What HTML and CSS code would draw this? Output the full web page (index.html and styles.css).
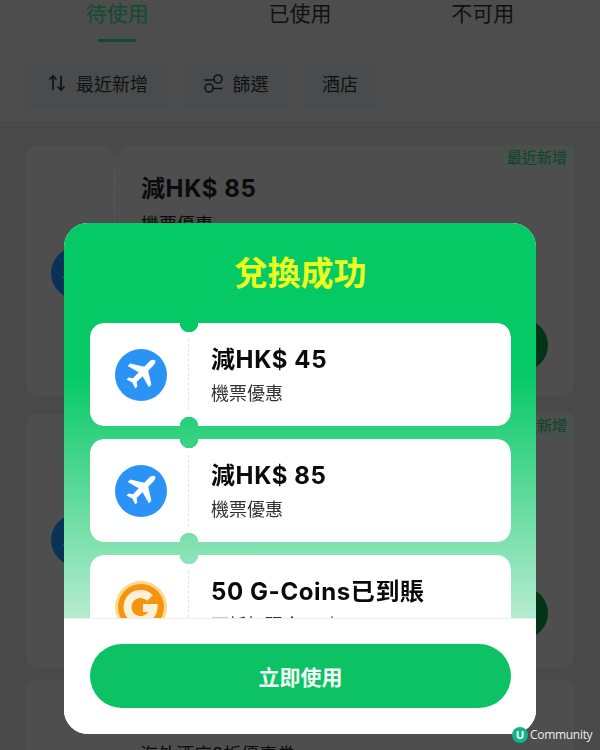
FILE: index.html
```html
<!DOCTYPE html>
<html lang="zh-Hant">
<head>
    <meta charset="UTF-8">
    <meta name="viewport" content="width=device-width, initial-scale=1.0">
    <title>兌換成功</title>
    <link rel="stylesheet" href="styles.css">
</head>
<body>
    <div class="page">
        <div class="top">
            <div class="tabs">
                <div class="tab active">待使用<span class="tab-line"></span></div>
                <div class="tab">已使用</div>
                <div class="tab">不可用</div>
            </div>
            <div class="chips">
                <div class="chip chip-sort">
                    <svg width="18" height="18" viewBox="0 0 18 18" fill="none" stroke="#111" stroke-width="1.7"><path d="M5 16V2M1.500 5.500 5 2l3.500 3.500M13 2v14M9.500 12.500 13 16l3.500-3.500"/></svg>
                    最近新增
                </div>
                <div class="chip chip-filter">
                    <svg width="19" height="19" viewBox="0 0 19 19" fill="none" stroke="#111" stroke-width="1.600"><circle cx="14" cy="5" r="4"/><circle cx="5" cy="14" r="4"/><path d="M0.500 6h9.500M9 14.500h9.500"/></svg>
                    篩選
                </div>
                <div class="chip chip-hotel">酒店</div>
            </div>
        </div>

        <div class="list">
            <div class="bg-card bg-card-first">
                <span class="bg-tag">最近新增</span>
                <svg class="bg-icon" width="52" height="52" viewBox="0 0 52 52"><circle cx="26" cy="26" r="26" fill="#0a3256"/><path fill="#4d5054" d="M40.500 11.500c-1.800-1.300-4.500-.6-6.300 1.200l-5 5-14-3.200-2.500 2.500 11 6.300-5.700 6-4.500-.7-2 2 5.800 3 3 5.800 2-2-.7-4.500 6-5.700 6.300 11 2.500-2.500-3.200-14 5-5c1.800-1.900 2.900-4.200 1.800-5.200z"/></svg>
                <div class="bg-text">
                    <div class="bg-title">減HK$ 85</div>
                    <div class="bg-sub">機票優惠</div>
                </div>
                <span class="bg-btn"></span>
            </div>
            <div class="bg-card bg-card-second">
                <span class="bg-tag">最近新增</span>
                <svg class="bg-icon" width="52" height="52" viewBox="0 0 52 52"><circle cx="26" cy="26" r="26" fill="#0a3256"/><path fill="#4d5054" d="M40.500 11.500c-1.800-1.300-4.500-.6-6.300 1.200l-5 5-14-3.200-2.500 2.500 11 6.300-5.700 6-4.500-.7-2 2 5.800 3 3 5.800 2-2-.7-4.500 6-5.700 6.300 11 2.500-2.500-3.200-14 5-5c1.800-1.900 2.900-4.200 1.800-5.200z"/></svg>
                <span class="bg-btn"></span>
            </div>
            <div class="bg-card bg-card-last">
                <div class="bg-sub">海外酒店8折優惠券</div>
            </div>
        </div>
    </div>

    <div class="modal">
        <div class="modal-head">
            <h2>兌換成功</h2>
            <div class="coupon">
                <div class="coupon-icon">
                    <svg width="52" height="52" viewBox="0 0 52 52"><circle cx="26" cy="26" r="26" fill="#2b93f5"/><path fill="#fff" d="M40.500 11.500c-1.800-1.300-4.500-.6-6.300 1.200l-5 5-14-3.200-2.500 2.500 11 6.300-5.700 6-4.500-.7-2 2 5.800 3 3 5.800 2-2-.7-4.500 6-5.700 6.300 11 2.500-2.500-3.200-14 5-5c1.800-1.900 2.900-4.200 1.800-5.200z"/></svg>
                </div>
                <div class="coupon-text">
                    <div class="coupon-title">減HK$ 45</div>
                    <div class="coupon-sub">機票優惠</div>
                </div>
            </div>
            <div class="coupon">
                <div class="coupon-icon">
                    <svg width="52" height="52" viewBox="0 0 52 52"><circle cx="26" cy="26" r="26" fill="#2b93f5"/><path fill="#fff" d="M40.500 11.500c-1.800-1.300-4.500-.6-6.300 1.200l-5 5-14-3.200-2.500 2.500 11 6.300-5.700 6-4.500-.7-2 2 5.800 3 3 5.800 2-2-.7-4.500 6-5.700 6.300 11 2.500-2.500-3.200-14 5-5c1.800-1.900 2.900-4.200 1.800-5.200z"/></svg>
                </div>
                <div class="coupon-text">
                    <div class="coupon-title">減HK$ 85</div>
                    <div class="coupon-sub">機票優惠</div>
                </div>
            </div>
            <div class="coupon">
                <div class="coupon-icon">
                    <svg width="52" height="52" viewBox="0 0 52 52"><circle cx="26" cy="26" r="26" fill="#fdd98a"/><circle cx="26" cy="26" r="23" fill="#f7940f"/><path fill="none" stroke="#fdf0d8" stroke-width="8" d="M35 17A13 13 0 1 0 38.500 27H28"/></svg>
                </div>
                <div class="coupon-text">
                    <div class="coupon-title">50 G-Coins已到賬</div>
                    <div class="coupon-sub">可抵扣現金HK$ 0.99</div>
                </div>
            </div>
        </div>
        <div class="modal-foot">
            <button class="use-btn">立即使用</button>
        </div>
    </div>

    <div class="watermark">
        <span class="wm-badge">U</span>
        <span class="wm-text">Community</span>
    </div>
</body>
</html>
```

FILE: styles.css
```css
html, body {
    margin: 0;
    height: 100%;
}

body {
    font-family: Inter, "Noto Sans CJK TC", sans-serif;
    background-color: #484948;
    color: #0b0b0b;
    overflow: hidden;
    position: relative;
}

.page {
    height: 750px;
    overflow: hidden;
}

.top {
    background-color: #4d4d4d;
    height: 122px;
}

.tabs {
    display: flex;
    height: 43px;
    padding: 0 26px;
}

.tab {
    flex: 1;
    text-align: center;
    font-size: 21px;
    line-height: 28px;
    position: relative;
    color: #111;
}

.tab.active {
    color: #0f4c30;
}

.tab-line {
    position: absolute;
    left: 50%;
    margin-left: -19px;
    top: 39px;
    width: 38px;
    height: 3px;
    background-color: #0b4c2c;
}

.chips {
    display: flex;
    gap: 12px;
    padding: 19px 0 0 26px;
}

.chip {
    height: 46px;
    padding-bottom: 4px;
    box-sizing: border-box;
    display: flex;
    align-items: center;
    justify-content: center;
    gap: 10px;
    background-color: #4a4b4c;
    border-radius: 6px;
    font-size: 18px;
    color: #111;
}

.chip-sort { width: 144px; }
.chip-filter { width: 108px; }
.chip-hotel { width: 76px; }

.list {
    display: flex;
    flex-direction: column;
    gap: 18px;
    padding: 24px 26px 0;
}

.bg-card {
    background-color: #4e4e4e;
    border-radius: 10px;
    height: 250px;
    flex: none;
    position: relative;
}

.bg-card-first::before {
    content: "";
    position: absolute;
    left: 88px;
    top: 24px;
    height: 60px;
    border-left: 1px dashed #5c5c5c;
}

.bg-card-first::after {
    content: "";
    position: absolute;
    left: 81px;
    top: -9px;
    width: 18px;
    height: 18px;
    border-radius: 50%;
    background-color: #484948;
}

.bg-card-second {
    height: 254px;
}

.bg-card-second .bg-icon {
    top: 100px;
}

.bg-card-last {
    height: 120px;
    margin-top: -6px;
    padding: 54px 0 0 114px;
    box-sizing: border-box;
}

.bg-tag {
    position: absolute;
    right: 0;
    top: -1px;
    width: 74px;
    height: 26px;
    line-height: 26px;
    text-align: center;
    font-size: 15px;
    color: #0b4429;
    background-color: #4a504c;
    border-radius: 3px;
}

.bg-icon {
    position: absolute;
    left: 25px;
    top: 101px;
}

.bg-btn {
    position: absolute;
    right: 26px;
    top: 173px;
    width: 52px;
    height: 52px;
    border-radius: 50%;
    background-color: #043418;
}

.bg-text {
    padding: 28px 0 0 115px;
}

.bg-title {
    font-size: 24px;
    line-height: 30px;
    font-weight: bold;
    letter-spacing: 0.6px;
}

.bg-sub {
    font-size: 18px;
    line-height: 22px;
    margin-top: 10px;
}

.modal {
    position: absolute;
    left: 64px;
    top: 223px;
    width: 472px;
    height: 511px;
    border-radius: 24px;
    overflow: hidden;
    background-color: #fff;
}

.modal-head {
    height: 395px;
    padding: 0 25px 0 26px;
    overflow: hidden;
    background: linear-gradient(180deg, #05c965 0, #05c965 150px, #b6ecd0 395px);
}

.modal-head h2 {
    margin: 0;
    padding-top: 29px;
    height: 71px;
    font-size: 33px;
    line-height: 42px;
    text-align: center;
    font-weight: bold;
    color: #eaff1f;
}

.coupon {
    height: 103px;
    margin-bottom: 13px;
    display: flex;
    background-color: #fff;
    border-radius: 14px;
    -webkit-mask-image: radial-gradient(circle at 99px 0, transparent 9px, #000 9.5px), radial-gradient(circle at 99px 100%, transparent 9px, #000 9.5px);
    -webkit-mask-composite: source-in;
    mask-image: radial-gradient(circle at 99px 0, transparent 9px, #000 9.5px), radial-gradient(circle at 99px 100%, transparent 9px, #000 9.5px);
    mask-composite: intersect;
}

.coupon-icon {
    width: 99px;
    padding: 0 0 0 3px;
    margin: 16px 0;
    display: flex;
    align-items: center;
    justify-content: center;
    box-sizing: border-box;
    border-right: 1px dashed #e2e2e2;
}

.coupon-text {
    padding: 21px 0 0 22px;
}

.coupon-title {
    font-size: 24px;
    line-height: 32px;
    font-weight: bold;
    letter-spacing: 0.6px;
    color: #0b0b0b;
}

.coupon-sub {
    font-size: 18px;
    line-height: 24px;
    margin-top: 6px;
    color: #333;
}

.modal-foot {
    height: 116px;
    box-sizing: border-box;
    padding: 25px 25px 0 26px;
    border-top: 1px solid #eee;
    background-color: #fff;
}

.use-btn {
    display: block;
    width: 100%;
    height: 64px;
    border: 0;
    border-radius: 32px;
    background-color: #0cc265;
    color: #f4fff8;
    font-family: inherit;
    font-size: 21px;
    font-weight: bold;
}

.watermark {
    position: absolute;
    left: 512px;
    top: 726px;
    display: flex;
    align-items: center;
    gap: 2px;
}

.wm-badge {
    width: 16px;
    height: 16px;
    border-radius: 50%;
    background-color: #12b58a;
    color: #fff;
    font-size: 11px;
    font-weight: bold;
    line-height: 16px;
    text-align: center;
}

.wm-text {
    font-family: "Open Sans", sans-serif;
    font-size: 12px;
    color: #ececec;
    letter-spacing: -0.3px;
}
```
